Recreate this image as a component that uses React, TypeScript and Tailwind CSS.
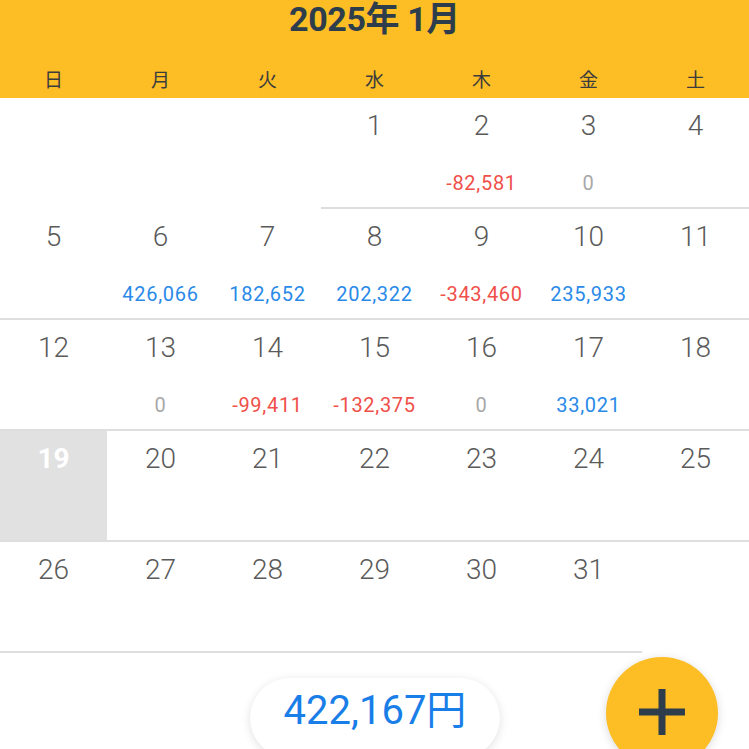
import React from "react";

type Day = { day: number; amount?: number; today?: boolean } | null;

const weekdays = ["日", "月", "火", "水", "木", "金", "土"];

const amounts: Record<number, number> = {
  2: -82581,
  3: 0,
  6: 426066,
  7: 182652,
  8: 202322,
  9: -343460,
  10: 235933,
  13: 0,
  14: -99411,
  15: -132375,
  16: 0,
  17: 33021,
};

const buildWeeks = (): Day[][] => {
  const cells: Day[] = [null, null, null];
  for (let d = 1; d <= 31; d++) {
    cells.push({ day: d, amount: amounts[d], today: d === 19 });
  }
  while (cells.length % 7 !== 0) cells.push(null);
  const weeks: Day[][] = [];
  for (let i = 0; i < cells.length; i += 7) weeks.push(cells.slice(i, i + 7));
  return weeks;
};

const fmt = (n: number) => n.toLocaleString("en-US");

const amountColor = (n: number) =>
  n > 0 ? "text-[#2a8ae8]" : n < 0 ? "text-[#f0504a]" : "text-[#a8a8a8]";

const Cell = ({ cell }: { cell: Day }) => {
  if (!cell) return <div className="h-[111px]" />;
  return (
    <div
      className={`h-[111px] border-b-2 border-[#dedede] flex flex-col items-center ${
        cell.today ? "bg-[#e1e1e1]" : ""
      }`}
    >
      <div
        className={`mt-[12px] text-[28px] leading-[32px] ${
          cell.today ? "text-white font-bold text-[25px]" : "text-[#5a5a5a] font-light"
        }`}
      >
        {cell.day}
      </div>
      {cell.amount !== undefined && (
        <div
          className={`mt-[29px] text-[20px] leading-[24px] tracking-[0.7px] ${amountColor(cell.amount)}`}
        >
          {fmt(cell.amount)}
        </div>
      )}
    </div>
  );
};

export default function App() {
  const weeks = buildWeeks();
  return (
    <div
      className="relative w-[749px] h-[749px] overflow-hidden bg-white"
      style={{ fontFamily: 'Roboto, "Noto Sans CJK JP", sans-serif' }}
    >
      <header className="h-[98px] bg-[#fdbd25] flex flex-col items-center">
        <h1 className="mt-[-1px] text-[34px] leading-[40px] font-bold text-[#2e3d4c] tracking-[-0.4px]">
          2025年 1月
        </h1>
        <div className="mt-[28px] grid grid-cols-7 w-full">
          {weekdays.map((w) => (
            <div
              key={w}
              className="text-center text-[19px] leading-[24px] text-[#3c3c3c]"
              style={{ fontFamily: '"Noto Sans CJK JP", sans-serif' }}
            >
              {w}
            </div>
          ))}
        </div>
      </header>

      <div className="flex flex-col">
        {weeks.map((week, i) => (
          <div key={i} className="grid grid-cols-7">
            {week.map((cell, j) => (
              <Cell key={j} cell={cell} />
            ))}
          </div>
        ))}
      </div>

      <div className="absolute left-[250px] top-[678px] w-[250px] h-[80px] rounded-full bg-white shadow-[0_2px_10px_rgba(0,0,0,0.12)] flex justify-center pt-[8px]">
        <span className="text-[40px] leading-[50px] text-[#1a7ee8]">422,167円</span>
      </div>

      <button className="absolute left-[606px] top-[657px] w-[112px] h-[112px] rounded-full bg-[#fdbd25] shadow-[0_2px_10px_rgba(0,0,0,0.15)] flex items-center justify-center">
        <svg width="46" height="46" viewBox="0 0 46 46" className="-mt-[3px]">
          <rect x="0" y="19.5" width="46" height="7" fill="#2e3d4c" />
          <rect x="19.5" y="0" width="7" height="46" fill="#2e3d4c" />
        </svg>
      </button>
    </div>
  );
}
